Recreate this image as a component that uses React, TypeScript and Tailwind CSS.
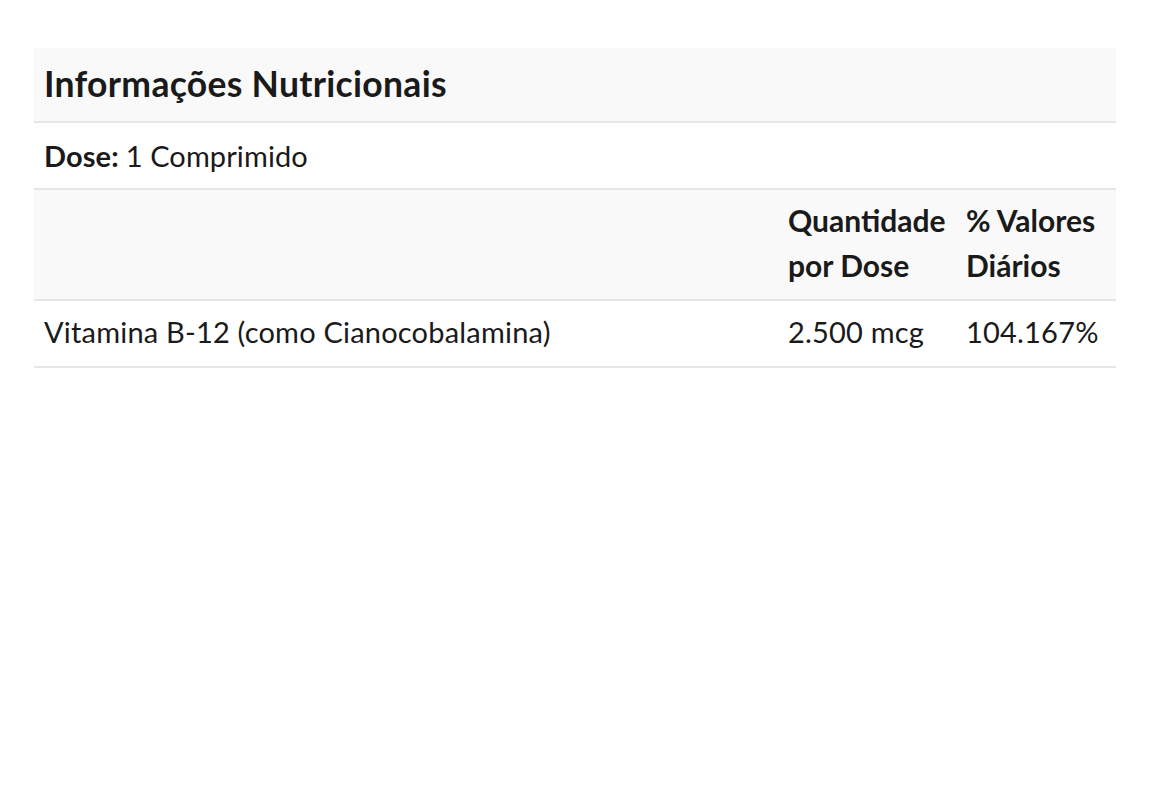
import React from "react";

export default function App() {
  return (
    <div className="w-[1150px] h-[800px] bg-white pt-[48px] px-[34px]" style={{ fontFamily: "Lato, 'Open Sans', sans-serif" }}>
      <div className="text-[#1a1a1a]">
        <div className="bg-[#f9f9f9] border-b-2 border-[#e6e6e6] h-[75px] flex items-center pl-[10px]">
          <h2 className="text-[35.5px] font-bold leading-none tracking-[0.3px] pb-[1px]">Informações Nutricionais</h2>
        </div>
        <div className="border-b-2 border-[#e6e6e6] h-[67px] flex items-center pl-[10px] text-[29px] tracking-[0.1px]">
          <span className="font-bold">Dose:</span>
          <span className="ml-[7px]">1 Comprimido</span>
        </div>
        <div className="bg-[#f9f9f9] border-b-2 border-[#e6e6e6] h-[111px] grid grid-cols-[744px_178px_160px] items-center text-[30px] font-bold leading-[45px] pb-[3px]">
          <div />
          <div className="pl-[10px] whitespace-nowrap">Quantidade<br />por Dose</div>
          <div className="pl-[10px] whitespace-nowrap">% Valores<br />Diários</div>
        </div>
        <div className="border-b-2 border-[#e6e6e6] h-[67px] grid grid-cols-[744px_178px_160px] items-center text-[29px] tracking-[0.2px] pb-[3px]">
          <div className="pl-[10px] whitespace-nowrap">Vitamina B-12 (como Cianocobalamina)</div>
          <div className="pl-[10px] whitespace-nowrap">2.500 mcg</div>
          <div className="pl-[10px] whitespace-nowrap">104.167%</div>
        </div>
      </div>
    </div>
  );
}
